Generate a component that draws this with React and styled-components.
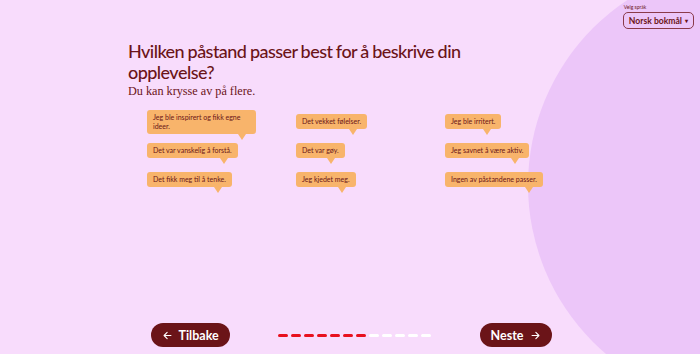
import React from 'react'
import styled, { createGlobalStyle } from 'styled-components'

const options = [
  'Jeg ble inspirert og fikk egne ideer.',
  'Det vekket følelser.',
  'Jeg ble irritert.',
  'Det var vanskelig å forstå.',
  'Det var gøy.',
  'Jeg savnet å være aktiv.',
  'Det fikk meg til å tenke.',
  'Jeg kjedet meg.',
  'Ingen av påstandene passer.',
]

const steps = 12
const done = 7

function App() {
  return (
    <>
      <Global />
      <Page>
        <Circle />
        <Header>
          <Lang>
            <LangLabel>Velg språk</LangLabel>
            <LangSelect>
              Norsk bokmål <Caret>▾</Caret>
            </LangSelect>
          </Lang>
        </Header>
        <Main>
          <Title>Hvilken påstand passer best for å beskrive din opplevelse?</Title>
          <Sub>Du kan krysse av på flere.</Sub>
          <Options>
            {options.map((o) => (
              <Cell key={o}>
                <Bubble>{o}</Bubble>
              </Cell>
            ))}
          </Options>
        </Main>
        <Footer>
          <NavButton>
            <Arrow viewBox="0 0 16 16">
              <path d="M13 8H3M7.5 3.5L3 8l4.5 4.5" />
            </Arrow>
            Tilbake
          </NavButton>
          <Progress>
            {Array.from({ length: steps }).map((_, i) => (
              <Dash key={i} $done={i < done} />
            ))}
          </Progress>
          <NavButton>
            Neste
            <Arrow viewBox="0 0 16 16">
              <path d="M3 8h10M8.5 3.5L13 8l-4.5 4.5" />
            </Arrow>
          </NavButton>
        </Footer>
      </Page>
    </>
  )
}

export default App

const Global = createGlobalStyle`
html, body {
  margin: 0;
  padding: 0;
}
body {
  background: #f8dcfc;
  font-family: Lato, "Open Sans", sans-serif;
}
`
const Page = styled.div`
position: relative;
overflow: hidden;
height: 354px;
display: flex;
flex-direction: column;
background: #f8dcfc;
color: #6b1418;
`
const Circle = styled.div`
position: absolute;
left: 528px;
top: -37px;
width: 444px;
height: 444px;
border-radius: 50%;
background: #ecc6f9;
z-index: 0;
`
const Header = styled.div`
position: relative;
z-index: 1;
display: flex;
justify-content: flex-end;
padding: 3px 6px 0 0;
height: 41px;
box-sizing: border-box;
`
const Lang = styled.div`
display: flex;
flex-direction: column;
align-items: flex-start;
`
const LangLabel = styled.div`
font-size: 5px;
line-height: 9px;
margin-left: 1px;
color: #6b1418;
`
const LangSelect = styled.div`
display: flex;
align-items: center;
gap: 3px;
height: 17px;
box-sizing: border-box;
padding: 0 5px;
border: 1px solid #8a3a4a;
border-radius: 5px;
font-size: 8.6px;
font-weight: 700;
color: #6b1418;
white-space: nowrap;
`
const Caret = styled.span`
font-size: 6px;
`
const Main = styled.main`
position: relative;
z-index: 1;
width: 444px;
margin: 0 auto;
flex: 1;
`
const Title = styled.h1`
margin: 0;
max-width: 370px;
font-family: Lato, sans-serif;
font-weight: 500;
font-size: 18px;
letter-spacing: -0.55px;
word-spacing: -0.5px;
line-height: 21px;
color: #6b1418;
`
const Sub = styled.p`
margin: 1px 0 0;
font-family: "Liberation Serif", serif;
font-size: 12.2px;
line-height: 14px;
color: #6b1418;
`
const Options = styled.div`
display: grid;
grid-template-columns: repeat(3, 149px);
grid-auto-rows: 29px;
padding: 16px 0 0 19px;
`
const Cell = styled.div`
display: flex;
align-items: flex-start;
&:first-child {
  margin-top: -4px;
}
`
const Bubble = styled.div`
position: relative;
max-width: 97px;
padding: 3px 6px;
background: #f8b46b;
border-radius: 3px;
font-size: 7px;
line-height: 9px;
color: #6b1418;
&::after {
  content: '';
  position: absolute;
  right: 10px;
  bottom: -6px;
  border-left: 4px solid transparent;
  border-right: 4px solid transparent;
  border-top: 6px solid #f8b46b;
}
`
const Footer = styled.footer`
position: relative;
z-index: 1;
display: flex;
align-items: center;
justify-content: space-between;
width: 401px;
margin: 0 auto 7px;
transform: translateX(1px);
`
const NavButton = styled.button`
display: flex;
align-items: center;
gap: 6px;
height: 24px;
padding: 0 11px;
border: none;
border-radius: 12px;
background: #6b1418;
color: #fff;
font-family: Lato, sans-serif;
font-weight: 700;
font-size: 12.5px;
`
const Arrow = styled.svg`
width: 11px;
height: 11px;
fill: none;
stroke: #fff;
stroke-width: 1.6;
stroke-linecap: round;
stroke-linejoin: round;
`
const Progress = styled.div`
display: flex;
gap: 3px;
`
const Dash = styled.div`
width: 10px;
height: 3px;
border-radius: 2px;
background: ${(p) => (p.$done ? '#e8101e' : '#ffffff')};
`
